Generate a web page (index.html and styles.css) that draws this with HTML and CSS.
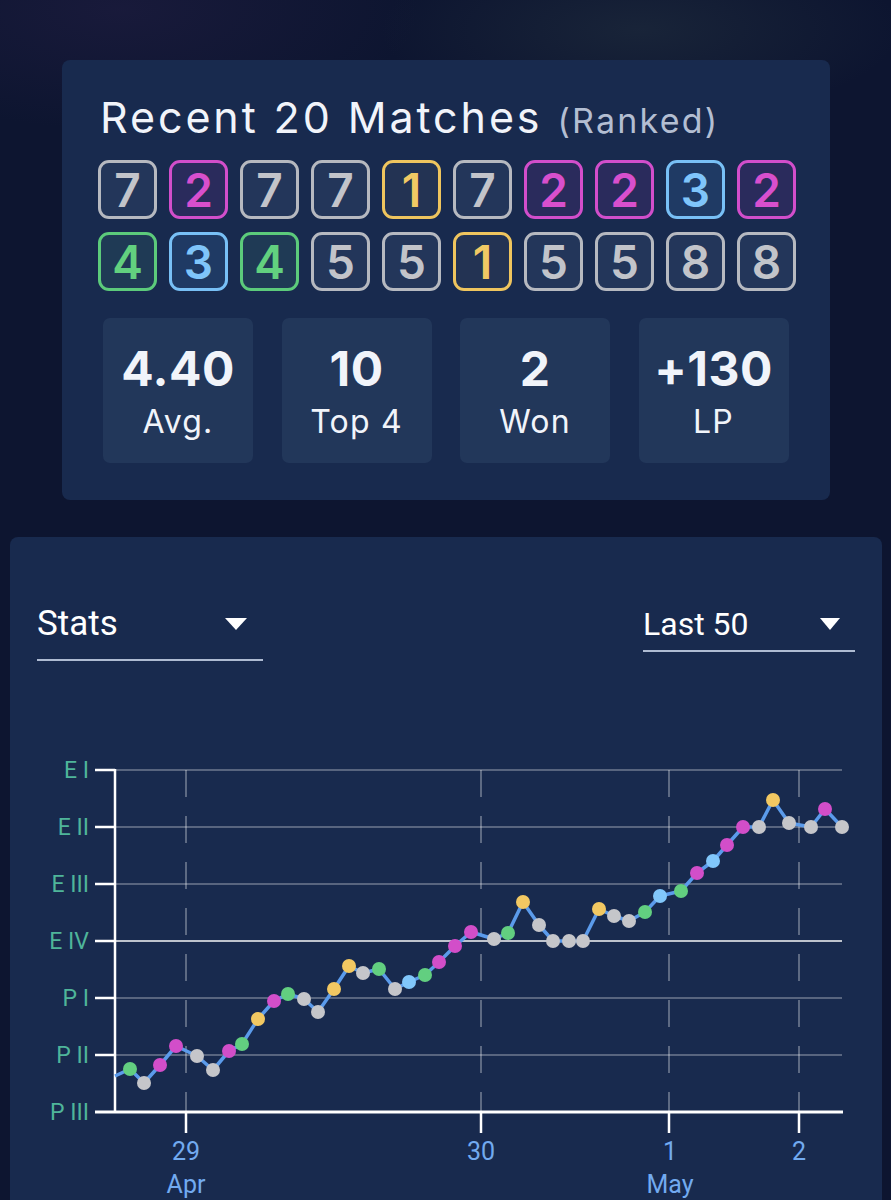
FILE: index.html
```html
<!DOCTYPE html>
<html lang="en">
<head>
    <meta charset="UTF-8">
    <meta name="viewport" content="width=device-width, initial-scale=1.0">
    <title>Match History</title>
    <link rel="stylesheet" href="styles.css">
</head>
<body>
    <div class="page">
        <section class="card recent">
            <h2 class="recent-title">Recent 20 Matches <span class="ranked">(Ranked)</span></h2>

            <div class="placements">
                <span class="badge gray">7</span>
                <span class="badge pink">2</span>
                <span class="badge gray">7</span>
                <span class="badge gray">7</span>
                <span class="badge gold">1</span>
                <span class="badge gray">7</span>
                <span class="badge pink">2</span>
                <span class="badge pink">2</span>
                <span class="badge blue">3</span>
                <span class="badge pink">2</span>

                <span class="badge green">4</span>
                <span class="badge blue">3</span>
                <span class="badge green">4</span>
                <span class="badge gray">5</span>
                <span class="badge gray">5</span>
                <span class="badge gold">1</span>
                <span class="badge gray">5</span>
                <span class="badge gray">5</span>
                <span class="badge gray">8</span>
                <span class="badge gray">8</span>
            </div>

            <div class="stats">
                <div class="stat">
                    <span class="stat-value">4.40</span>
                    <span class="stat-label">Avg.</span>
                </div>
                <div class="stat">
                    <span class="stat-value">10</span>
                    <span class="stat-label">Top 4</span>
                </div>
                <div class="stat">
                    <span class="stat-value">2</span>
                    <span class="stat-label">Won</span>
                </div>
                <div class="stat">
                    <span class="stat-value">+130</span>
                    <span class="stat-label">LP</span>
                </div>
            </div>
        </section>

        <section class="card chart-card">
            <div class="chart-controls">
                <div class="select select-stats">
                    <span>Stats</span>
                    <span class="caret"></span>
                </div>
                <div class="select select-range">
                    <span>Last 50</span>
                    <span class="caret"></span>
                </div>
            </div>

            <svg class="chart" width="872" height="520" viewBox="10 700 872 520">
                <!-- grid -->
                <g class="grid">
                    <line x1="115" y1="770" x2="842" y2="770" />
                    <line x1="115" y1="827" x2="842" y2="827" />
                    <line x1="115" y1="884" x2="842" y2="884" />
                    <line class="grid-strong" x1="115" y1="941" x2="842" y2="941" />
                    <line x1="115" y1="998" x2="842" y2="998" />
                    <line x1="115" y1="1055" x2="842" y2="1055" />
                </g>
                <g class="grid-days">
                    <line x1="186" y1="770" x2="186" y2="1112" />
                    <line x1="481" y1="770" x2="481" y2="1112" />
                    <line x1="669" y1="770" x2="669" y2="1112" />
                    <line x1="799" y1="770" x2="799" y2="1112" />
                </g>

                <!-- axes -->
                <g class="axis">
                    <line x1="115" y1="769" x2="115" y2="1112" />
                    <line class="axis-x" x1="95" y1="1112" x2="843" y2="1112" />
                    <line x1="95" y1="770" x2="115" y2="770" />
                    <line x1="95" y1="827" x2="115" y2="827" />
                    <line x1="95" y1="884" x2="115" y2="884" />
                    <line x1="95" y1="941" x2="115" y2="941" />
                    <line x1="95" y1="998" x2="115" y2="998" />
                    <line x1="95" y1="1055" x2="115" y2="1055" />
                    <line x1="186" y1="1112" x2="186" y2="1133" />
                    <line x1="481" y1="1112" x2="481" y2="1133" />
                    <line x1="669" y1="1112" x2="669" y2="1133" />
                    <line x1="799" y1="1112" x2="799" y2="1133" />
                </g>

                <g class="rank-labels">
                    <text x="89" y="778">E I</text>
                    <text x="89" y="835">E II</text>
                    <text x="89" y="892">E III</text>
                    <text x="89" y="949">E IV</text>
                    <text x="89" y="1006">P I</text>
                    <text x="89" y="1063">P II</text>
                    <text x="89" y="1120">P III</text>
                </g>

                <g class="date-labels">
                    <text x="186" y="1160">29</text>
                    <text x="186" y="1193">Apr</text>
                    <text x="481" y="1160">30</text>
                    <text x="670" y="1160">1</text>
                    <text x="670" y="1193">May</text>
                    <text x="799" y="1160">2</text>
                </g>

                <!-- lp history -->
                <polyline class="lp-line" points="115,1076 130,1069 144,1083 160,1065 176,1046 197,1056 213,1070 229,1051 242,1044 258,1019 274,1001 288,994 304,999 318,1012 334,989 349,966 363,973 379,969 395,989 409,982 425,975 439,962 455,946 471,932 494,939 508,933 523,902 539,925 553,941 569,941 583,941 599,909 614,916 629,921 645,912 660,896 681,891 697,873 713,861 727,845 743,827 759,827 773,800 789,823 811,827 825,809 842,827" />

                <g class="dots">
                    <circle class="green" cx="130" cy="1069" r="7" />
                    <circle class="gray" cx="144" cy="1083" r="7" />
                    <circle class="pink" cx="160" cy="1065" r="7" />
                    <circle class="pink" cx="176" cy="1046" r="7" />
                    <circle class="gray" cx="197" cy="1056" r="7" />
                    <circle class="gray" cx="213" cy="1070" r="7" />
                    <circle class="pink" cx="229" cy="1051" r="7" />
                    <circle class="green" cx="242" cy="1044" r="7" />
                    <circle class="gold" cx="258" cy="1019" r="7" />
                    <circle class="pink" cx="274" cy="1001" r="7" />
                    <circle class="green" cx="288" cy="994" r="7" />
                    <circle class="gray" cx="304" cy="999" r="7" />
                    <circle class="gray" cx="318" cy="1012" r="7" />
                    <circle class="gold" cx="334" cy="989" r="7" />
                    <circle class="gold" cx="349" cy="966" r="7" />
                    <circle class="gray" cx="363" cy="973" r="7" />
                    <circle class="green" cx="379" cy="969" r="7" />
                    <circle class="gray" cx="395" cy="989" r="7" />
                    <circle class="blue" cx="409" cy="982" r="7" />
                    <circle class="green" cx="425" cy="975" r="7" />
                    <circle class="pink" cx="439" cy="962" r="7" />
                    <circle class="pink" cx="455" cy="946" r="7" />
                    <circle class="pink" cx="471" cy="932" r="7" />
                    <circle class="gray" cx="494" cy="939" r="7" />
                    <circle class="green" cx="508" cy="933" r="7" />
                    <circle class="gold" cx="523" cy="902" r="7" />
                    <circle class="gray" cx="539" cy="925" r="7" />
                    <circle class="gray" cx="553" cy="941" r="7" />
                    <circle class="gray" cx="569" cy="941" r="7" />
                    <circle class="gray" cx="583" cy="941" r="7" />
                    <circle class="gold" cx="599" cy="909" r="7" />
                    <circle class="gray" cx="614" cy="916" r="7" />
                    <circle class="gray" cx="629" cy="921" r="7" />
                    <circle class="green" cx="645" cy="912" r="7" />
                    <circle class="blue" cx="660" cy="896" r="7" />
                    <circle class="green" cx="681" cy="891" r="7" />
                    <circle class="pink" cx="697" cy="873" r="7" />
                    <circle class="blue" cx="713" cy="861" r="7" />
                    <circle class="pink" cx="727" cy="845" r="7" />
                    <circle class="pink" cx="743" cy="827" r="7" />
                    <circle class="gray" cx="759" cy="827" r="7" />
                    <circle class="gold" cx="773" cy="800" r="7" />
                    <circle class="gray" cx="789" cy="823" r="7" />
                    <circle class="gray" cx="811" cy="827" r="7" />
                    <circle class="pink" cx="825" cy="809" r="7" />
                    <circle class="gray" cx="842" cy="827" r="7" />
                </g>
            </svg>
        </section>
    </div>
</body>
</html>
```

FILE: styles.css
```css
body {
    margin: 0;
    font-family: Inter, "Open Sans", sans-serif;
    color: #f1f4fa;
    background:
        radial-gradient(ellipse 260px 90px at 640px 30px, rgba(70, 95, 90, 0.2), transparent),
        radial-gradient(ellipse 300px 120px at 120px 10px, rgba(70, 45, 100, 0.2), transparent),
        #0d1530;
    overflow: hidden;
}

.page {
    padding-top: 60px;
}

.card {
    background-color: #182a4e;
    border-radius: 8px;
}

/* recent matches */
.recent {
    width: 768px;
    margin-left: 62px;
    padding: 27px 0 37px;
    box-sizing: border-box;
}
.recent-title {
    margin: 0 0 0 38px;
    font-size: 43px;
    font-weight: 400;
    line-height: 60px;
    letter-spacing: 2.9px;
    white-space: nowrap;
}
.ranked {
    font-size: 34px;
    line-height: 0;
    letter-spacing: 2.2px;
    color: #b3bed2;
}

.placements {
    display: grid;
    grid-template-columns: repeat(10, 59px);
    column-gap: 12px;
    row-gap: 13px;
    margin: 13px 0 0 36px;
}
.badge {
    height: 59px;
    box-sizing: border-box;
    border: 3px solid;
    border-radius: 11px;
    display: flex;
    align-items: center;
    justify-content: center;
    font-size: 46px;
    font-weight: 600;
    line-height: 1;
}
.badge.gray {
    color: #c2c4ca;
    border-color: #b6b9c0;
    background-color: #23365a;
}
.badge.pink {
    color: #d84fcd;
    border-color: #d24ecb;
    background-color: #2a2b5c;
}
.badge.gold {
    color: #f1c964;
    border-color: #efc55e;
    background-color: #233353;
}
.badge.blue {
    color: #7fc5fa;
    border-color: #78c0f6;
    background-color: #1f3a64;
}
.badge.green {
    color: #62d17f;
    border-color: #5ccb7b;
    background-color: #1f3a55;
}

.stats {
    display: grid;
    grid-template-columns: repeat(4, 150px);
    column-gap: 28.5px;
    margin: 27px 0 0 41px;
}
.stat {
    height: 145px;
    padding-top: 5px;
    box-sizing: border-box;
    background-color: #22375a;
    border-radius: 7px;
    display: flex;
    flex-direction: column;
    align-items: center;
    justify-content: center;
}
.stat-value {
    font-size: 48px;
    font-weight: 700;
    line-height: 54px;
    letter-spacing: 0.5px;
}
.stat-label {
    font-size: 32px;
    font-weight: 400;
    line-height: 44px;
    margin-top: 4px;
    letter-spacing: 1.2px;
}

/* chart */
.chart-card {
    margin: 37px 9px 0 10px;
    padding: 64px 27px 0;
    height: 700px;
}
.chart-controls {
    display: flex;
    justify-content: space-between;
    align-items: flex-start;
    height: 99px;
    font-family: Roboto, sans-serif;
    color: #fff;
}
.select {
    display: flex;
    align-items: center;
    justify-content: space-between;
    border-bottom: 2px solid #aebbd2;
    box-sizing: border-box;
}
.select-stats {
    width: 226px;
    height: 60px;
    padding-bottom: 13px;
    font-size: 35px;
}
.select-stats .caret {
    margin-right: 16px;
}
.select-range {
    width: 212px;
    height: 51px;
    padding-bottom: 4px;
    font-size: 32px;
}
.select-range .caret {
    margin-right: 15px;
    border-left-width: 10px;
    border-right-width: 10px;
}
.caret {
    width: 0;
    height: 0;
    border-left: 11px solid transparent;
    border-right: 11px solid transparent;
    border-top: 12px solid #fff;
}

.chart {
    display: block;
    margin: 0 -27px;
}
.grid line {
    stroke: rgba(255, 255, 255, 0.28);
    stroke-width: 2;
}
.grid .grid-strong {
    stroke: rgba(255, 255, 255, 0.72);
}
.grid-days line {
    stroke: rgba(255, 255, 255, 0.3);
    stroke-width: 2;
    stroke-dasharray: 27 19;
}
.axis line {
    stroke: #fff;
    stroke-width: 2.5;
}
.axis .axis-x {
    stroke-width: 3;
}
.rank-labels text {
    font-family: Roboto, sans-serif;
    font-size: 23px;
    fill: #4fb59a;
    text-anchor: end;
}
.date-labels text {
    font-family: Roboto, sans-serif;
    font-size: 25px;
    fill: #72aaf0;
    text-anchor: middle;
}
.lp-line {
    fill: none;
    stroke: #5b9beb;
    stroke-width: 3.5;
    stroke-linejoin: round;
}
.dots .gray { fill: #c5c6ca; }
.dots .pink { fill: #d24ec9; }
.dots .gold { fill: #f2c862; }
.dots .blue { fill: #81c7fb; }
.dots .green { fill: #62cf80; }
```
